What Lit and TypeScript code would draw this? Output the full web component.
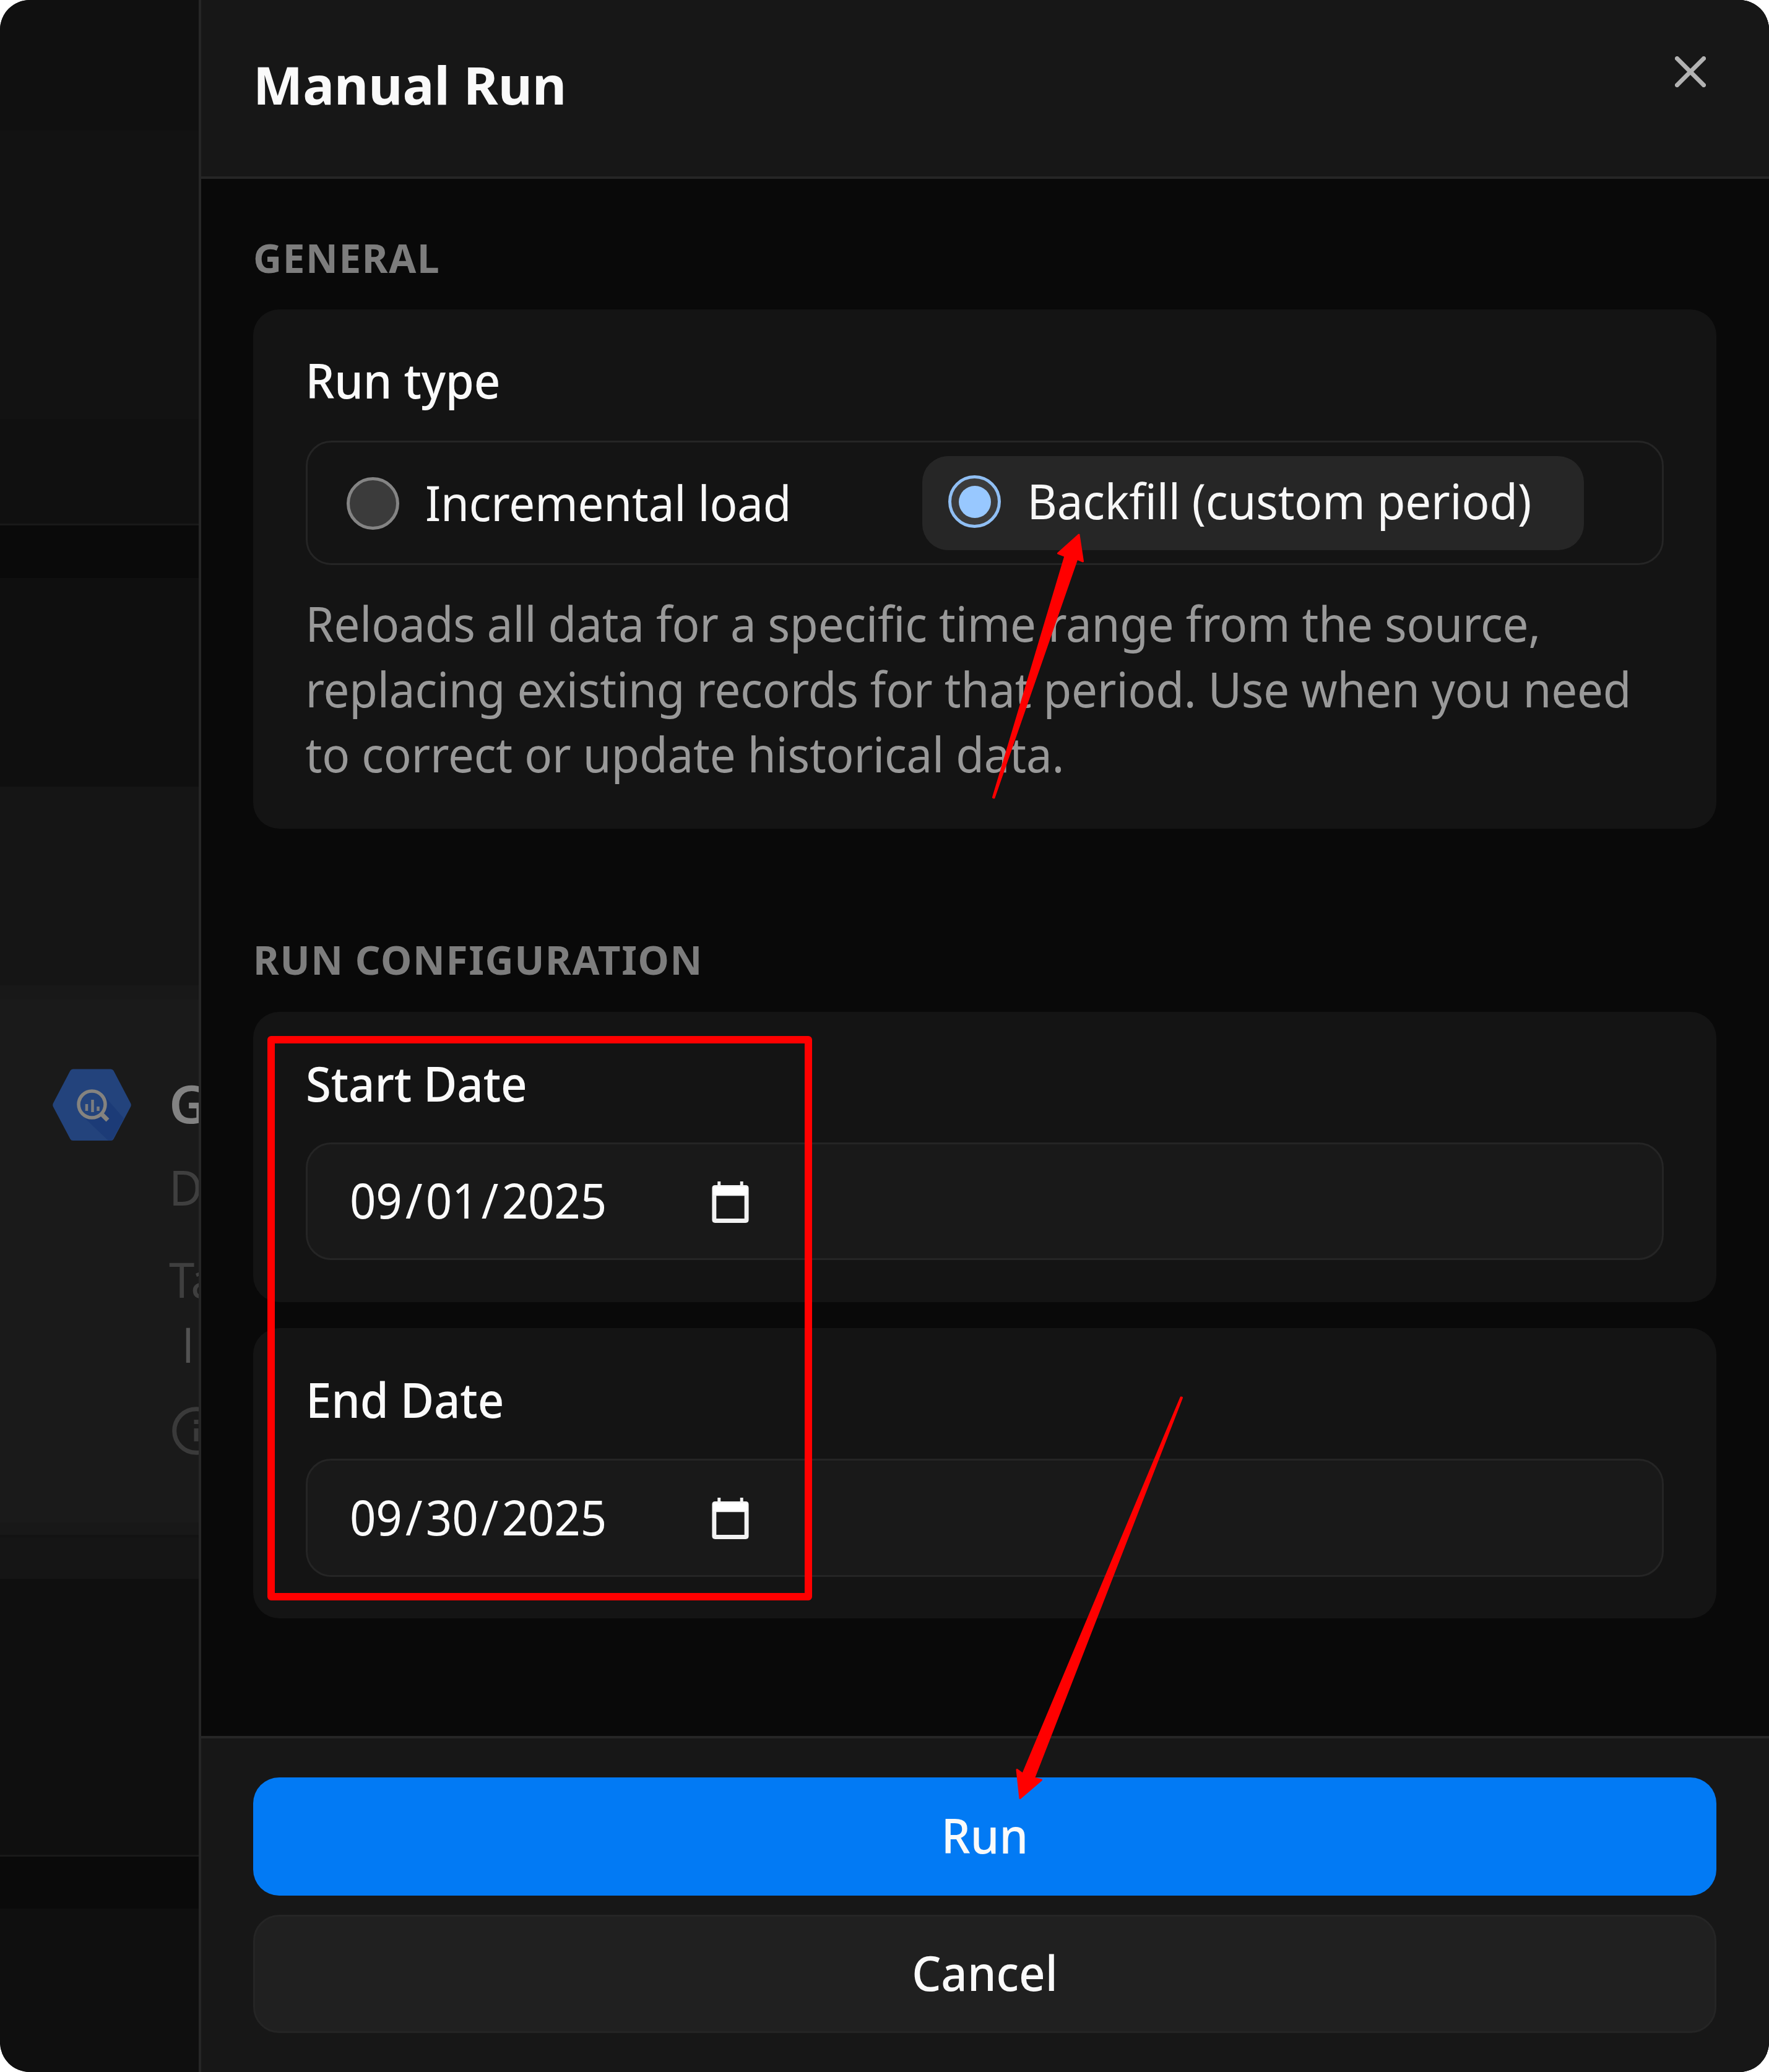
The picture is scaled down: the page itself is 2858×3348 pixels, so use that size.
import { LitElement, html, css, svg } from "lit";
import { customElement, property } from "lit/decorators.js";
import { classMap } from "lit/directives/class-map.js";

const textStyles = css`
  .t {
    display: block;
    font-size: 74.4px;
    line-height: 105.7px;
    letter-spacing: -0.19px;
    white-space: nowrap;
    transform: scaleY(1.06);
    transform-origin: 0 calc(50% + 28.9px);
  }
`;

@customElement("radio-option")
class RadioOption extends LitElement {
  @property() label = "";
  @property({ type: Boolean }) checked = false;

  static styles = [
    textStyles,
    css`
      :host {
        display: block;
      }
      .option {
        display: flex;
        align-items: center;
        gap: 42.5px;
        height: 152px;
        box-sizing: border-box;
        border-radius: 42px;
        padding: 1px 0 0;
      }
      .option.checked {
        background: #262626;
        padding: 0 0 4px 42.5px;
      }
      .dot {
        box-sizing: border-box;
        width: 85px;
        height: 85px;
        flex: none;
        border-radius: 50%;
        border: 5px solid #848484;
        background: #3b3b3b;
        display: flex;
        align-items: center;
        justify-content: center;
      }
      .checked .dot {
        border-color: #90bff4;
      }
      .inner {
        width: 52px;
        height: 52px;
        border-radius: 50%;
        background: #98c8ff;
      }
      .t {
        color: #f7f7f7;
      }
    `,
  ];

  render() {
    return html`<div class=${classMap({ option: true, checked: this.checked })}>
      <span class="dot">${this.checked ? html`<span class="inner"></span>` : null}</span>
      <span class="t">${this.label}</span>
    </div>`;
  }
}

@customElement("date-card")
class DateCard extends LitElement {
  @property() label = "";
  @property() value = "";

  static styles = [
    textStyles,
    css`
      :host {
        display: block;
      }
      .card {
        box-sizing: border-box;
        height: 469px;
        padding: 64px 85px 0;
        border-radius: 42px;
        background: #141414;
      }
      .label {
        color: #fafafa;
        font-weight: 500;
      }
      .field {
        box-sizing: border-box;
        height: 190.5px;
        margin-top: 41.7px;
        border: 3.5px solid #252525;
        border-radius: 41px;
        background: #191919;
        display: flex;
        align-items: center;
        padding-left: 68px;
        color: #fafafa;
      }
      .date {
        display: flex;
        gap: 5.3px;
        width: 584.5px;
        line-height: 105.7px;
      }
      .icon {
        width: 60px;
        height: 69px;
        margin-top: 2px;
        display: block;
      }
    `,
  ];

  render() {
    const [m, d, y] = this.value.split("/");
    return html`<div class="card">
      <span class="t label">${this.label}</span>
      <div class="field">
        <span class="t date"
          ><span>${m}</span><span>/</span><span>${d}</span><span>/</span><span>${y}</span></span
        >
        <svg class="icon" viewBox="0 0 60 70">
          <path
            fill="#f2f2f2"
            fill-rule="evenodd"
            d="M9 1h5v6h32V1h5v6h4q5 0 5 5v52q0 5-5 5H5q-5 0-5-5V12q0-5 5-5h4zM7 24.500v37.500h46V24.500z"
          />
          <path fill="#fff" d="M2 10h56v13H2z" />
        </svg>
      </div>
    </div>`;
  }
}

@customElement("destination-list")
class DestinationList extends LitElement {
  static styles = [
    textStyles,
    css`
      :host {
        display: block;
        width: 321px;
        flex: none;
        overflow: hidden;
      }
      .column {
        display: flex;
        flex-direction: column;
        height: 3348px;
        width: 321px;
      }
      .band {
        flex: none;
        box-sizing: border-box;
      }
      .b1 { height: 211px; background: #101010; }
      .b2 { height: 466px; background: #121212; }
      .b3 { height: 172px; background: #101010; border-bottom: 3.5px solid #191919; }
      .b4 { height: 85px; background: #0a0a0a; }
      .b5 { height: 337px; background: #0f0f0f; }
      .b6 { height: 321px; background: #151515; }
      .b7 { height: 23px; background: #181818; }
      .b8 { height: 845px; background: #1a1a1a; }
      .b9 { height: 20px; background: #181818; }
      .b10 { height: 71px; background: #151515; border-top: 4px solid #131313; }
      .b11 { height: 449px; background: #0f0f0f; border-bottom: 3.5px solid #191919; }
      .b12 { height: 84px; background: #0a0a0a; }
      .b13 { height: 264px; background: #0f0f0f; }
      .item {
        display: flex;
        gap: 61px;
        padding: 112px 0 0 85px;
        overflow: hidden;
      }
      .hex {
        flex: none;
        width: 127px;
        height: 117px;
      }
      .info {
        display: flex;
        flex-direction: column;
        width: 48px;
        overflow: visible;
      }
      .name {
        font-size: 85px;
        font-weight: 600;
        line-height: 106px;
        color: #828282;
        margin-top: 1.5px;
        white-space: nowrap;
      }
      .dim { color: #3f3f3f; }
      .row1 { margin-top: 32.6px; }
      .row2 { margin-top: 42.8px; }
      .tag {
        font-family: "Open Sans", sans-serif;
        font-weight: 500;
        color: #525252;
        padding-left: 20.5px;
      }
      .ring {
        width: 78px;
        height: 78px;
        margin: 46px 0 0 5px;
        flex: none;
      }
    `,
  ];

  render() {
    return html`<div class="column">
      <div class="band b1"></div>
      <div class="band b2"></div>
      <div class="band b3"></div>
      <div class="band b4"></div>
      <div class="band b5"></div>
      <div class="band b6"></div>
      <div class="band b7"></div>
      <div class="band b8 item">
        <svg class="hex" viewBox="0 0 127 117">
          <path d="M33 0.500H94Q97 0.500 98.500 3L126 55.500Q127.500 58.500 126 61.500L98.500 113.500Q97 116 94 116H33Q30 116 28.500 113.500L1 61.500Q-0.500 58.500 1 55.500L28.500 3Q30 0.500 33 0.500z" fill="#23437c" />
          <path d="M82 42L115 80L97 114Q95 116 93 116H90L47 75z" fill="#1c3b77" />
          <circle cx="63.500" cy="57.500" r="21.500" fill="#23437c" stroke="#85837f" stroke-width="5.500" />
          <path d="M55 57v11M64.500 50v20M73.500 61v7" stroke="#7b7d80" stroke-width="4.500" />
          <path d="M78 72L89 83" stroke="#85837f" stroke-width="7" />
        </svg>
        <div class="info">
          <span class="name">G</span>
          <span class="t dim row1">D</span>
          <span class="t dim row2">Ta</span>
          <span class="t tag">I</span>
          <svg class="ring" viewBox="0 0 78 78">
            <circle cx="39" cy="39" r="35.300" fill="none" stroke="#3a3a3a" stroke-width="7" />
            <path d="M35.500 21h7v7h-7zM35.500 35h7v21h-7z" fill="#3a3a3a" />
          </svg>
        </div>
      </div>
      <div class="band b9"></div>
      <div class="band b10"></div>
      <div class="band b11"></div>
      <div class="band b12"></div>
      <div class="band b13"></div>
    </div>`;
  }
}

@customElement("app-root")
class AppRoot extends LitElement {
  static styles = [
    textStyles,
    css`
      :host {
        display: block;
        width: 2858px;
        height: 3348px;
        background: #fff;
        font-family: "Noto Sans", sans-serif;
      }
      .page {
        position: relative;
        display: flex;
        width: 2858px;
        height: 3348px;
        border-radius: 48px;
        overflow: hidden;
        background: #0f0f0f;
      }
      .panel {
        box-sizing: border-box;
        flex: 1;
        min-width: 0;
        height: 3348px;
        border-left: 4px solid #262626;
        background: #090909;
        display: flex;
        flex-direction: column;
      }
      .header {
        box-sizing: border-box;
        height: 289px;
        flex: none;
        background: #171717;
        border-bottom: 4px solid #262626;
        display: flex;
        justify-content: space-between;
        padding: 76px 102px 0 84px;
      }
      .title {
        margin: 0;
        font-size: 85px;
        line-height: 120px;
        font-weight: 700;
        color: #fafafa;
      }
      .close {
        width: 50px;
        height: 50px;
        margin-top: 15px;
      }
      .body {
        flex: 1;
        padding: 84.5px 85px 0 84px;
      }
      .heading {
        margin: 0 0 41.5px;
        font-size: 63.75px;
        line-height: 85px;
        font-weight: 700;
        letter-spacing: 1.6px;
        color: #7d7d7d;
        white-space: nowrap;
      }
      .card {
        box-sizing: border-box;
        height: 839px;
        padding: 63.2px 85px 0 84.5px;
        border-radius: 42px;
        background: #141414;
        margin-bottom: 169px;
      }
      .label {
        color: #fafafa;
        font-weight: 500;
      }
      .group {
        box-sizing: border-box;
        height: 201px;
        margin-top: 43.5px;
        border: 3.5px solid #252525;
        border-radius: 41px;
        display: flex;
        align-items: center;
        padding-left: 63px;
      }
      .first { width: 930px; }
      .second { width: 1069px; }
      .desc {
        margin-top: 42.5px;
        color: #999;
      }
      .cards {
        display: flex;
        flex-direction: column;
        gap: 42.5px;
      }
      .footer {
        box-sizing: border-box;
        height: 543.5px;
        flex: none;
        background: #171717;
        border-top: 4px solid #262626;
        padding: 63.5px 85px 0 84px;
        display: flex;
        flex-direction: column;
        gap: 31.5px;
      }
      .btn {
        box-sizing: border-box;
        height: 190.5px;
        flex: none;
        border-radius: 42px;
        display: flex;
        align-items: center;
        justify-content: center;
        color: #fafafa;
        font-weight: 500;
      }
      .btn .t { letter-spacing: 0; }
      .run { background: #027af4; }
      .cancel {
        background: #202020;
        border: 3.5px solid #252525;
      }
      .marks {
        position: absolute;
        inset: 0;
        width: 2858px;
        height: 3348px;
        pointer-events: none;
      }
    `,
  ];

  private marks = svg`
    <g fill="#f00" stroke="#f00" stroke-linejoin="round">
      <rect x="438" y="1680" width="868" height="900" fill="none" stroke-width="12" />
      <path stroke-width="3" d="M1743 864L1749.500 907L1740 903L1606 1289L1604.500 1288.500L1721 898.500L1709.500 894z" />
      <path stroke-width="3" d="M1648 2905.500L1643 2859.500L1652.500 2866.500L1908 2258L1909.500 2258.500L1670.500 2873L1682.500 2876z" />
    </g>
  `;

  private description = [
    "Reloads all data for a specific time range from the source,",
    "replacing existing records for that period. Use when you need",
    "to correct or update historical data.",
  ];

  render() {
    return html`<div class="page">
      <destination-list></destination-list>
      <div class="panel">
        <div class="header">
          <h1 class="title">Manual Run</h1>
          <svg class="close" viewBox="0 0 50 50">
            <path d="M3.500 3.500L46.500 46.500M46.500 3.500L3.500 46.500" stroke="#b2b2b2" stroke-width="7" stroke-linecap="square" />
          </svg>
        </div>
        <div class="body">
          <h2 class="heading">GENERAL</h2>
          <div class="card">
            <span class="t label">Run type</span>
            <div class="group">
              <radio-option class="first" label="Incremental load"></radio-option>
              <radio-option class="second" label="Backfill (custom period)" checked></radio-option>
            </div>
            <div class="desc">${this.description.map((l) => html`<span class="t">${l}</span>`)}</div>
          </div>
          <h2 class="heading">RUN CONFIGURATION</h2>
          <div class="cards">
            <date-card label="Start Date" value="09/01/2025"></date-card>
            <date-card label="End Date" value="09/30/2025"></date-card>
          </div>
        </div>
        <div class="footer">
          <div class="btn run"><span class="t">Run</span></div>
          <div class="btn cancel"><span class="t">Cancel</span></div>
        </div>
      </div>
      <svg class="marks" viewBox="0 0 2858 3348">${this.marks}</svg>
    </div>`;
  }
}
